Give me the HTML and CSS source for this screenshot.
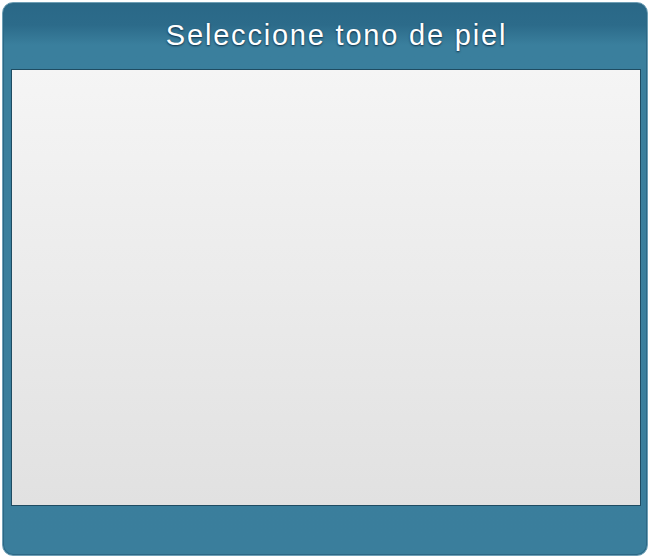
FILE: index.html
```html
<!DOCTYPE html>
<html lang="es">
<head>
<meta charset="utf-8">
<title>Seleccione tono de piel</title>
<link rel="stylesheet" href="styles.css">
</head>
<body>
<div class="panel">
  <div class="title">Seleccione tono de piel</div>
  <div class="content"></div>
</div>
</body>
</html>
```
FILE: styles.css
```css
html, body {
  margin: 0;
  padding: 0;
  background: #ffffff;
}
.panel {
  box-sizing: border-box;
  margin: 2px 2px 0 2px;
  width: 646px;
  height: 554px;
  border: 1px solid #6e9fb6;
  border-radius: 11px;
  box-shadow: inset 0 0 0 1px #2c6885;
  background: linear-gradient(to bottom, #2a6887 0px, #2c6b8a 22px, #3a7f9d 42px, #3a7e9c 100%);
  padding: 0 6px 0 8px;
  display: flex;
  flex-direction: column;
}
.title {
  height: 66px;
  box-sizing: border-box;
  padding-top: 14px;
  padding-left: 21px;
  text-align: center;
  font-family: "Liberation Sans", Arial, sans-serif;
  font-size: 29px;
  letter-spacing: 1.8px;
  color: #ffffff;
  line-height: 36px;
  white-space: nowrap;
  text-shadow: 0 1px 2px rgba(0, 20, 40, 0.75);
}
.content {
  box-sizing: border-box;
  height: 437px;
  border: 1px solid #1f4c62;
  background: linear-gradient(to bottom, #f5f5f5 0%, #e1e1e1 100%);
}
```
